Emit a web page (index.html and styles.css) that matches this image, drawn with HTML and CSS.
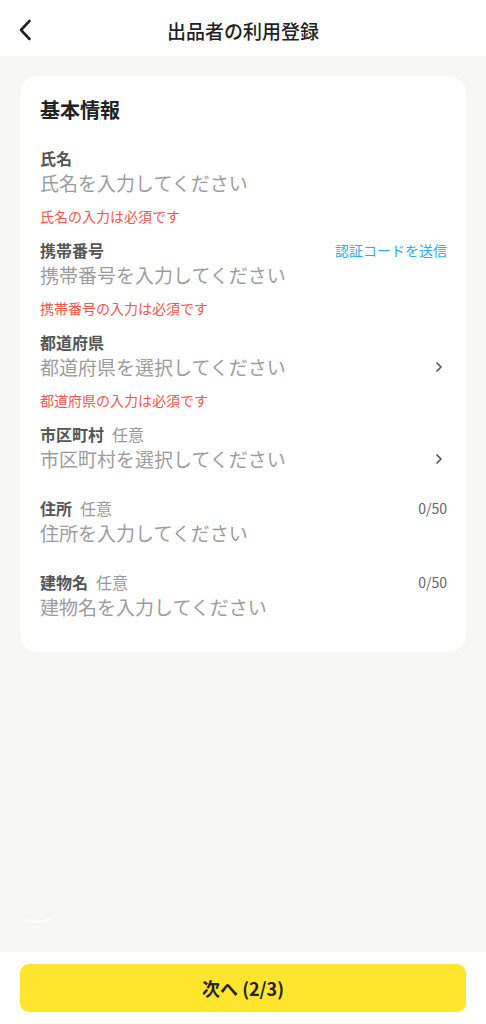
FILE: index.html
```html
<!DOCTYPE html>
<html lang="ja">
<head>
<meta charset="utf-8">
<title>出品者の利用登録</title>
<link rel="stylesheet" href="styles.css">
</head>
<body>
<header class="topbar">
  <button class="back" aria-label="戻る">
    <svg width="14" height="22" viewBox="0 0 14 22"><path d="M11.5 2 L3 11 L11.5 20" fill="none" stroke="#222" stroke-width="2.6" stroke-linecap="round" stroke-linejoin="round"/></svg>
  </button>
  <h1 class="title">出品者の利用登録</h1>
</header>
<main class="content">
  <section class="card">
    <h2 class="card-title">基本情報</h2>

    <div class="field field--error">
      <div class="label-row"><span class="label">氏名</span></div>
      <div class="input-row"><span class="placeholder">氏名を入力してください</span></div>
      <div class="error">氏名の入力は必須です</div>
    </div>

    <div class="field field--error">
      <div class="label-row"><span class="label">携帯番号</span><span class="link">認証コードを送信</span></div>
      <div class="input-row"><span class="placeholder">携帯番号を入力してください</span></div>
      <div class="error">携帯番号の入力は必須です</div>
    </div>

    <div class="field field--error">
      <div class="label-row"><span class="label">都道府県</span></div>
      <div class="input-row"><span class="placeholder">都道府県を選択してください</span>
        <svg class="chev" width="8" height="12" viewBox="0 0 8 12"><path d="M2 2 L6 6 L2 10" fill="none" stroke="#555" stroke-width="1.7" stroke-linecap="round" stroke-linejoin="round"/></svg>
      </div>
      <div class="error">都道府県の入力は必須です</div>
    </div>

    <div class="field">
      <div class="label-row"><span class="label">市区町村<span class="optional">任意</span></span></div>
      <div class="input-row"><span class="placeholder">市区町村を選択してください</span>
        <svg class="chev" width="8" height="12" viewBox="0 0 8 12"><path d="M2 2 L6 6 L2 10" fill="none" stroke="#555" stroke-width="1.7" stroke-linecap="round" stroke-linejoin="round"/></svg>
      </div>
    </div>

    <div class="field">
      <div class="label-row"><span class="label">住所<span class="optional">任意</span></span><span class="count">0/50</span></div>
      <div class="input-row"><span class="placeholder">住所を入力してください</span></div>
    </div>

    <div class="field">
      <div class="label-row"><span class="label">建物名<span class="optional">任意</span></span><span class="count">0/50</span></div>
      <div class="input-row"><span class="placeholder">建物名を入力してください</span></div>
    </div>
  </section>
  <svg class="arc" width="30" height="8" viewBox="0 0 30 8"><path d="M2 4 Q14 8 27 3" fill="none" stroke="#fff" stroke-width="1.5" stroke-linecap="round"/></svg>
</main>
<footer class="footer">
  <button class="next">次へ (2/3)</button>
</footer>
</body>
</html>
```

FILE: styles.css
```css
* { box-sizing: border-box; }
html, body { margin: 0; padding: 0; }
body {
  width: 486px;
  height: 1024px;
  display: flex;
  flex-direction: column;
  font-family: "Noto Sans CJK JP", "Noto Sans", sans-serif;
  background: #f7f7f5;
  color: #222;
}
.topbar {
  height: 56px;
  background: #fff;
  display: flex;
  align-items: center;
  justify-content: center;
  position: relative;
}
.back {
  position: absolute;
  left: 17px;
  top: 18px;
  border: 0;
  padding: 0;
  background: none;
  width: 16px;
  height: 24px;
  display: flex;
  align-items: center;
  justify-content: center;
}
.title {
  margin: 0;
  font-size: 19px;
  font-weight: 500;
  line-height: 26px;
  color: #222;
  margin-top: 6px;
}
.content {
  flex: 1;
  padding: 20px 20px 0;
  position: relative;
}
.card {
  background: #fff;
  border-radius: 18px;
  padding: 20px 19px 32px 20px;
}
.card-title {
  margin: 0 0 23px;
  font-size: 20px;
  line-height: 28px;
  font-weight: 700;
  color: #222;
}
.field { margin-bottom: 25px; }
.field--error { margin-bottom: 13px; }
.field:last-child { margin-bottom: 0; }
.label-row {
  display: flex;
  justify-content: space-between;
  align-items: center;
  height: 22px;
}
.label {
  font-size: 16px;
  font-weight: 700;
  color: #555;
  line-height: 22px;
}
.optional {
  font-weight: 400;
  color: #999;
  margin-left: 8px;
}
.link {
  font-size: 14px;
  color: #2badea;
}
.count {
  font-size: 14px;
  color: #666;
}
.input-row {
  display: flex;
  justify-content: space-between;
  align-items: center;
  height: 26px;
  margin-top: 1px;
}
.placeholder {
  font-size: 19px;
  line-height: 26px;
  color: #9c9c9c;
}
.chev { margin-right: 4px; }
.error {
  margin-top: 10px;
  font-size: 14px;
  line-height: 20px;
  color: #f2574f;
}
.arc {
  position: absolute;
  left: 24px;
  bottom: 28px;
}
.footer {
  height: 72px;
  background: #fff;
  padding: 12px 20px 0;
}
.next {
  width: 100%;
  height: 48px;
  border: 0;
  border-radius: 9px;
  background: #ffe52c;
  font-family: "Noto Sans CJK JP", "Noto Sans", sans-serif;
  font-size: 18px;
  font-weight: 700;
  color: #222;
}
```
